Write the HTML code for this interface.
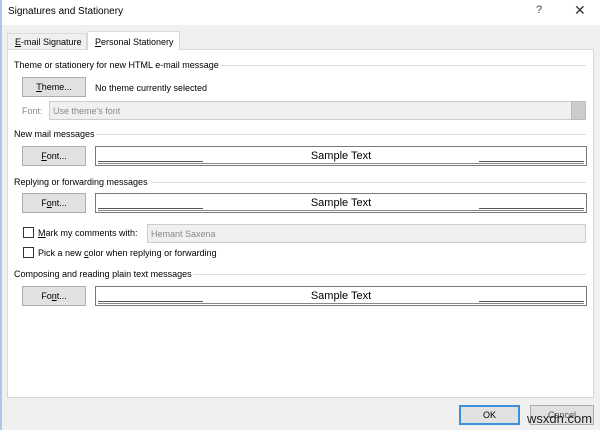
<!DOCTYPE html>
<html><head><meta charset="utf-8"><style>
*{margin:0;padding:0;box-sizing:border-box}
body{width:600px;height:430px;background:#f0f0f0;font-family:"Liberation Sans",sans-serif;font-size:9px;color:#000;position:relative;overflow:hidden}
.a{position:absolute}
.btn{position:absolute;background:#e1e1e1;border:1px solid #adadad;text-align:center;font-size:9px;line-height:18px}
.sec{position:absolute;left:14px;font-size:9px}
.line{position:absolute;height:1px;background:#dcdcdc}
.box{position:absolute;left:95px;width:492px;height:20px;border:1px solid #7a7a7a;background:#fff}
.box .s{position:absolute;left:2px;top:14px;width:105px;height:1px;background:#555}
.box .r{position:absolute;right:2px;top:14px;width:105px;height:1px;background:#555}
.box .b{position:absolute;left:2px;right:2px;top:16px;height:1px;background:#888}
.box .t{position:absolute;left:0;right:0;top:3px;text-align:center;font-size:11px}
.cb{position:absolute;left:23px;width:11px;height:11px;border:1px solid #333;background:#fff}
u{text-decoration:underline}
</style></head><body>
<div class="a" style="left:0;top:0;width:600px;height:25px;background:#fff"></div>
<div class="a" style="left:0;top:0;width:2px;height:430px;background:#a9c8ea"></div>
<div class="a" style="left:8px;top:6px;font-size:10px">Signatures and Stationery</div>
<div class="a" style="left:536px;top:4px;font-size:11px;color:#444">?</div>
<div class="a" style="left:574px;top:2px;font-size:14px;color:#333">✕</div>
<!-- tabs -->
<div class="a" style="left:7px;top:33px;width:80px;height:17px;border:1px solid #d9d9d9;border-bottom:none;background:#f0f0f0;padding:3px 0 0 7px;font-size:9px"><u>E</u>-mail Signature</div>
<div class="a" style="left:87px;top:31px;width:93px;height:19px;border:1px solid #d9d9d9;border-bottom:none;background:#fff;padding:5px 0 0 7px;font-size:9px;z-index:2"><u>P</u>ersonal Stationery</div>
<div class="a" style="left:7px;top:49px;width:587px;height:349px;background:#fff;border:1px solid #d9d9d9"></div>

<div class="sec" style="top:60px">Theme or stationery for new HTML e-mail message</div>
<div class="line" style="left:220px;top:65px;width:366px"></div>
<div class="btn" style="left:22px;top:77px;width:64px;height:20px"><u>T</u>heme...</div>
<div class="a" style="left:95px;top:83px">No theme currently selected</div>
<div class="a" style="left:22px;top:106px;color:#888">Font:</div>
<div class="a" style="left:49px;top:101px;width:537px;height:19px;background:#f0f0f0;border:1px solid #ccc;color:#888;padding:4px 0 0 3px">Use theme's font</div>
<div class="a" style="left:571px;top:101px;width:15px;height:19px;background:#ccc;border:1px solid #bbb"></div>

<div class="sec" style="top:129px">New mail messages</div>
<div class="line" style="left:96px;top:134px;width:490px"></div>
<div class="btn" style="left:22px;top:146px;width:64px;height:20px"><u>F</u>ont...</div>
<div class="box" style="top:146px"><div class="s"></div><div class="r"></div><div class="b"></div><div class="t">Sample Text</div></div>

<div class="sec" style="top:177px">Replying or forwarding messages</div>
<div class="line" style="left:152px;top:182px;width:434px"></div>
<div class="btn" style="left:22px;top:193px;width:64px;height:20px">F<u>o</u>nt...</div>
<div class="box" style="top:193px"><div class="s"></div><div class="r"></div><div class="b"></div><div class="t">Sample Text</div></div>

<div class="cb" style="top:227px"></div>
<div class="a" style="left:38px;top:228px"><u>M</u>ark my comments with:</div>
<div class="a" style="left:147px;top:224px;width:439px;height:19px;background:#f0f0f0;border:1px solid #ccc;color:#888;padding:4px 0 0 3px">Hemant Saxena</div>
<div class="cb" style="top:247px"></div>
<div class="a" style="left:38px;top:248px">Pick a new <u>c</u>olor when replying or forwarding</div>

<div class="sec" style="top:269px">Composing and reading plain text messages</div>
<div class="line" style="left:193px;top:274px;width:393px"></div>
<div class="btn" style="left:22px;top:286px;width:64px;height:20px">Fo<u>n</u>t...</div>
<div class="box" style="top:286px"><div class="s"></div><div class="r"></div><div class="b"></div><div class="t">Sample Text</div></div>

<div class="btn" style="left:459px;top:405px;width:61px;height:20px;border:2px solid #3c8fd8;line-height:16px">OK</div>
<div class="btn" style="left:530px;top:405px;width:64px;height:20px;color:#555">Cancel</div>
<div class="a" style="left:527px;top:411px;font-size:13px;color:#222">wsxdn.com</div>
</body></html>
